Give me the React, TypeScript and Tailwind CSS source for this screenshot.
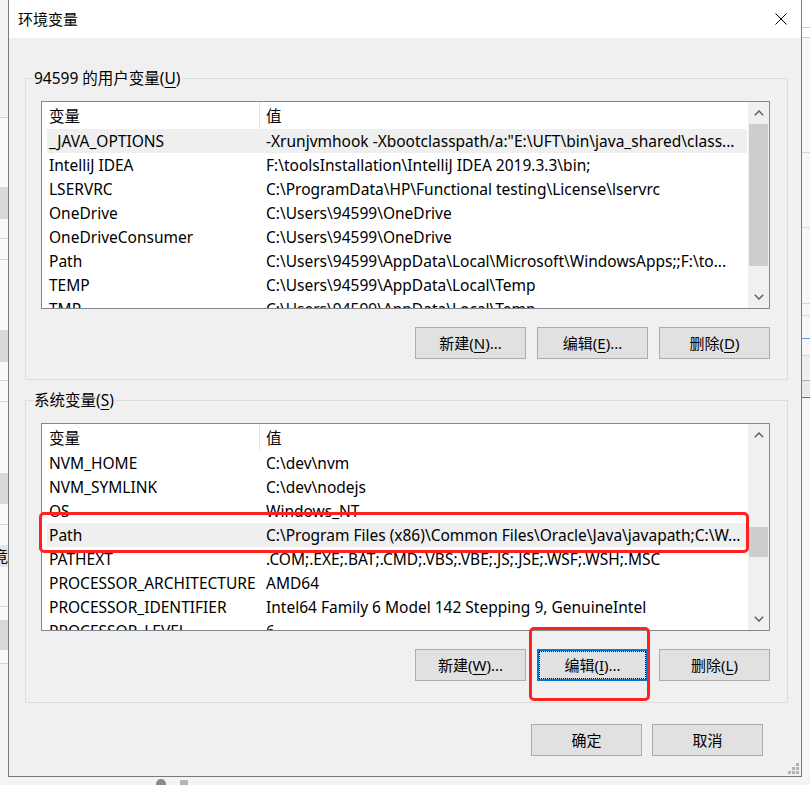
import React from 'react'

type Row = { name: string; value: string }

const userVars: Row[] = [
  { name: '_JAVA_OPTIONS', value: '-Xrunjvmhook -Xbootclasspath/a:"E:\\UFT\\bin\\java_shared\\class...' },
  { name: 'IntelliJ IDEA', value: 'F:\\toolsInstallation\\IntelliJ IDEA 2019.3.3\\bin;' },
  { name: 'LSERVRC', value: 'C:\\ProgramData\\HP\\Functional testing\\License\\lservrc' },
  { name: 'OneDrive', value: 'C:\\Users\\94599\\OneDrive' },
  { name: 'OneDriveConsumer', value: 'C:\\Users\\94599\\OneDrive' },
  { name: 'Path', value: 'C:\\Users\\94599\\AppData\\Local\\Microsoft\\WindowsApps;;F:\\to...' },
  { name: 'TEMP', value: 'C:\\Users\\94599\\AppData\\Local\\Temp' },
  { name: 'TMP', value: 'C:\\Users\\94599\\AppData\\Local\\Temp' },
]

const systemVars: Row[] = [
  { name: 'NVM_HOME', value: 'C:\\dev\\nvm' },
  { name: 'NVM_SYMLINK', value: 'C:\\dev\\nodejs' },
  { name: 'OS', value: 'Windows_NT' },
  { name: 'Path', value: 'C:\\Program Files (x86)\\Common Files\\Oracle\\Java\\javapath;C:\\W...' },
  { name: 'PATHEXT', value: '.COM;.EXE;.BAT;.CMD;.VBS;.VBE;.JS;.JSE;.WSF;.WSH;.MSC' },
  { name: 'PROCESSOR_ARCHITECTURE', value: 'AMD64' },
  { name: 'PROCESSOR_IDENTIFIER', value: 'Intel64 Family 6 Model 142 Stepping 9, GenuineIntel' },
  { name: 'PROCESSOR_LEVEL', value: '6' },
]

function U({ children }: { children: React.ReactNode }) {
  return <span className="underline underline-offset-[3px] decoration-1">{children}</span>
}

function Chevron({ up }: { up?: boolean }) {
  return (
    <svg width="10" height="6" viewBox="0 0 10 6" fill="none">
      <path
        d={up ? 'M0.8 5.2 L5 1 L9.2 5.2' : 'M0.8 0.8 L5 5 L9.2 0.8'}
        stroke="#606060"
        strokeWidth="1.5"
      />
    </svg>
  )
}

function WinButton({ children, focused }: { children: React.ReactNode; focused?: boolean }) {
  return (
    <button
      className={`w-[111px] h-[32px] bg-[#e1e1e1] text-[15px] text-black flex items-center justify-center ${
        focused
          ? 'border-2 border-[#0078d7] outline-1 outline-dotted outline-black outline-offset-[-3px]'
          : 'border border-[#adadad]'
      }`}
    >
      {children}
    </button>
  )
}

function VarList({
  rows,
  selected,
  trackTop,
  thumb,
}: {
  rows: Row[]
  selected: number
  trackTop: string
  thumb: string
}) {
  return (
    <div className="h-[208px] w-[729px] border border-[#828790] bg-white flex text-[15.5px]">
      <div className="flex-1 overflow-hidden">
        {/* header */}
        <div className="flex h-[27px] items-center">
          <div className="w-[218px] h-full pl-[7px] pt-[2px] flex items-center border-r border-[#e5e5e5]">变量</div>
          <div className="pl-[6px] pt-[2px]">值</div>
        </div>
        {rows.map((r, i) => (
          <div
            key={r.name}
            className={`flex h-[24px] items-center pt-[2px] ml-[5px] mr-[1px] whitespace-nowrap ${
              i === selected ? 'bg-[#efefef]' : ''
            }`}
          >
            <div className="w-[219px] shrink-0 pl-[2px]">{r.name}</div>
            <div className="flex-1 overflow-hidden">{r.value}</div>
          </div>
        ))}
      </div>
      {/* scrollbar */}
      <div className="w-[21px] bg-[#f0f0f0] flex flex-col">
        <div className="h-[22px] flex items-center justify-center">
          <Chevron up />
        </div>
        <div className="flex-1 flex flex-col">
          <div className={trackTop} />
          <div className={`${thumb} mx-[1px] bg-[#cdcdcd]`} />
        </div>
        <div className="h-[22px] flex items-center justify-center">
          <Chevron />
        </div>
      </div>
    </div>
  )
}

function Group({
  label,
  children,
  last,
}: {
  label: React.ReactNode
  children: React.ReactNode
  last?: boolean
}) {
  return (
    <fieldset
      className={`w-[763px] border border-[#dcdcdc] pl-[15px] pr-[17px] pt-[13px] ${last ? 'pb-[21px]' : 'pb-[20px]'}`}
    >
      <legend className="ml-[-8px] px-[1px] leading-[20px] text-[15.5px]">{label}</legend>
      {children}
    </fieldset>
  )
}

function Line({ c = 'bg-[#d6d6d6]' }: { c?: string }) {
  return <div className={`h-[1px] shrink-0 ${c}`} />
}

export default function App() {
  return (
    <div className="relative w-[810px] h-[785px] overflow-hidden bg-[#f6f6f6] text-[15px] text-black font-['Noto_Sans','Noto_Sans_CJK_SC',sans-serif] flex flex-col">
      <div className="flex h-[777px]">
        {/* window behind, left edge */}
        <div className="w-[8px] flex flex-col bg-[#f9f9f9]">
          <div className="h-[117px] shrink-0 bg-[#f3f3f3]" />
          <Line />
          <div className="h-[69px] shrink-0" />
          <div className="h-[32px] shrink-0 bg-[#d9d9d9]" />
          <div className="h-[19px] shrink-0" />
          <Line />
          <div className="h-[20px] shrink-0" />
          <Line />
          <div className="h-[70px] shrink-0" />
          <div className="h-[32px] shrink-0 bg-[#d9d9d9]" />
          <div className="h-[18px] shrink-0" />
          <Line />
          <div className="h-[20px] shrink-0" />
          <Line />
          <div className="h-[71px] shrink-0" />
          <div className="h-[31px] shrink-0 bg-[#d9d9d9]" />
          <div className="h-[20px] shrink-0" />
          <Line />
          <div className="h-[20px] shrink-0" />
          <div className="h-[22px] shrink-0 bg-[#e4e4e4] flex justify-end items-center overflow-hidden leading-[20px]">
            <span>竟</span>
          </div>
          <div className="h-[39px] shrink-0" />
          <Line />
          <div className="h-[13px] shrink-0" />
          <div className="h-[30px] shrink-0 bg-[#d9d9d9]" />
          <div className="h-[13px] shrink-0" />
          <Line />
          <div className="flex-1 bg-[#f4f4f4]" />
        </div>

        {/* dialog */}
        <div className="w-[794px] border-x border-b border-[#7a7a7a] bg-[#f0f0f0] flex flex-col">
          <div className="h-[38px] bg-white flex items-center justify-between pl-[9px] pr-[14px]">
            <span>环境变量</span>
            <svg width="12" height="12" viewBox="0 0 12 12">
              <path d="M0.5 0.5 L11.5 11.5 M11.5 0.5 L0.5 11.5" stroke="#000" strokeWidth="1" />
            </svg>
          </div>

          <div className="flex-1 flex flex-col pl-[16px]">
            <div className="mt-[30px]">
              <Group
                label={
                  <>
                    94599 的用户变量(<U>U</U>)
                  </>
                }
              >
                <VarList rows={userVars} selected={0} trackTop="h-0" thumb="h-[142px]" />
                <div className="flex justify-end gap-[11px] mt-[18px]">
                  <WinButton>
                    新建(<U>N</U>)...
                  </WinButton>
                  <WinButton>
                    编辑(<U>E</U>)...
                  </WinButton>
                  <WinButton>
                    删除(<U>D</U>)
                  </WinButton>
                </div>
              </Group>
            </div>

            <div className="mt-[10px]">
              <Group
                last
                label={
                  <>
                    系统变量(<U>S</U>)
                  </>
                }
              >
                <VarList rows={systemVars} selected={3} trackTop="h-[81px]" thumb="h-[30px]" />
                <div className="flex justify-end gap-[11px] mt-[18px]">
                  <WinButton>
                    新建(<U>W</U>)...
                  </WinButton>
                  <WinButton focused>
                    编辑(<U>I</U>)...
                  </WinButton>
                  <WinButton>
                    删除(<U>L</U>)
                  </WinButton>
                </div>
              </Group>
            </div>

            <div className="flex justify-end gap-[10px] mt-[21px] pr-[38px]">
              <WinButton>确定</WinButton>
              <WinButton>取消</WinButton>
            </div>

            <div className="flex-1 flex items-end justify-end pr-[2px] pb-[2px]">
              <svg width="11" height="11" viewBox="0 0 11 11" fill="#b4b4b4">
                <rect x="8" y="0" width="3" height="3" />
                <rect x="4" y="4" width="3" height="3" />
                <rect x="8" y="4" width="3" height="3" />
                <rect x="0" y="8" width="3" height="3" />
                <rect x="4" y="8" width="3" height="3" />
                <rect x="8" y="8" width="3" height="3" />
              </svg>
            </div>
          </div>
        </div>

        {/* window behind, right edge */}
        <div className="w-[8px] flex flex-col bg-[#f7f7f7]">
          <div className="h-[27px] shrink-0 bg-white" />
          <Line c="bg-[#cfcfcf]" />
          <div className="h-[9px] shrink-0 bg-white" />
          <Line c="bg-[#cfcfcf]" />
          <div className="h-[114px] shrink-0" />
          <Line />
          <div className="h-[74px] shrink-0" />
          <Line />
          <div className="h-[75px] shrink-0" />
          <Line />
          <div className="h-[11px] shrink-0" />
          <Line />
          <div className="h-[22px] shrink-0" />
          <Line c="bg-[#5b9bd5]" />
          <div className="h-[16px] shrink-0" />
          <Line />
          <div className="h-[24px] shrink-0 bg-[#eeeeee]" />
          <Line c="bg-[#b0b0b0]" />
          <div className="h-[16px] shrink-0 bg-[#e8e8e8]" />
          <Line c="bg-[#6f6f6f]" />
          <div className="flex-1 bg-[#f5f5f5]" />
        </div>
      </div>

      {/* strip under the dialog */}
      <div className="flex-1 flex items-end pl-[156px] gap-[14px] bg-[#f4f4f4]">
        <div className="w-[10px] h-[6px] rounded-t-full bg-[#8a8a8a]" />
        <div className="w-[8px] h-[5px] bg-[#b5b5b5]" />
      </div>

      {/* red annotation boxes */}
      <div className="absolute left-[39px] top-[512px] w-[710px] h-[41px] border-[3px] border-[#ff2020] rounded-[5px]" />
      <div className="absolute left-[529px] top-[627px] w-[121px] h-[74px] border-[3px] border-[#ff2020] rounded-[5px]" />
    </div>
  )
}
